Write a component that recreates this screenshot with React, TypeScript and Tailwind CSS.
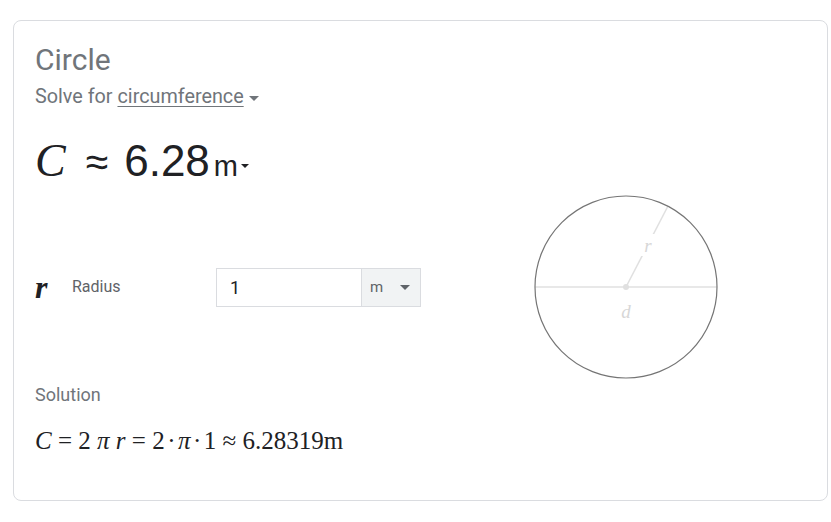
const roboto = { fontFamily: "Roboto, 'Liberation Sans', sans-serif" };
const arial = { fontFamily: "'Liberation Sans', Arial, sans-serif" };
const serif = { fontFamily: "'Liberation Serif', 'Times New Roman', serif" };

// Small triangular caret used by the dropdowns.
const Caret = ({ className }: { className: string }) => (
  <svg viewBox="0 0 10 5" className={className} fill="currentColor">
    <path d="M0 0 L10 0 L5 5 Z" />
  </svg>
);

const CircleDiagram = () => (
  <svg width="190" height="190" viewBox="0 0 190 190">
    <line x1="4" y1="95" x2="186" y2="95" stroke="#e0e0e0" strokeWidth="1.5" />
    <line x1="95" y1="95" x2="137" y2="14" stroke="#e0e0e0" strokeWidth="1.5" />
    <circle cx="95" cy="95" r="3" fill="#e0e0e0" />
    <circle cx="95" cy="95" r="91" fill="none" stroke="#757575" strokeWidth="1.2" />
    <rect x="110" y="42" width="14" height="22" fill="#fff" />
    <text x="117" y="60" textAnchor="middle" fontSize="19" fontStyle="italic" fill="#d7d7d7" style={serif}>
      r
    </text>
    <text x="95" y="126" textAnchor="middle" fontSize="19" fontStyle="italic" fill="#d7d7d7" style={serif}>
      d
    </text>
  </svg>
);

export default function App() {
  return (
    <div className="h-[522px] w-[831px] bg-white pl-[13px] pr-[3px] pt-[20px]" style={roboto}>
      <div className="flex h-[481px] w-[815px] flex-col rounded-[8px] border border-[#dadce0] pl-[21px] pt-[19px]">
        <div className="text-[30px] leading-[40px] text-[#70757a]">Circle</div>
        <div className="mt-[4px] flex items-center text-[19.8px] leading-[26px] text-[#70757a]">
          <span>Solve for&nbsp;</span>
          <span className="underline decoration-1 underline-offset-[3px]">circumference</span>
          <Caret className="ml-[5px] mt-[2px] h-[5px] w-[10px]" />
        </div>

        <div className="mt-[23px] flex items-baseline text-[#202124]">
          <span className="text-[46px] italic leading-[56px]" style={serif}>
            C
          </span>
          <span className="ml-[20px] text-[41px] leading-[40px]" style={arial}>
            ≈
          </span>
          <span className="ml-[16px] text-[44px] leading-[56px]" style={arial}>
            6.28
          </span>
          <span className="ml-[4px] text-[29px]" style={arial}>
            m
          </span>
          <Caret className="ml-[3px] h-[4px] w-[8px] -translate-y-[8px]" />
        </div>

        <div className="mt-[3px] flex">
          <div className="flex w-[496px] items-center">
            <span className="w-[37px] text-[32px] italic font-bold text-[#202124]" style={serif}>
              r
            </span>
            <span className="w-[144px] text-[16px] text-[#5f6368]">Radius</span>
            <div className="flex h-[39px] w-[205px] border border-[#dadce0]">
              <div className="flex w-[144px] items-center pl-[13px] text-[18px] text-[#202124]">1</div>
              <div className="flex flex-1 items-center justify-between border-l border-[#dadce0] bg-[#f1f3f4] pl-[8px] pr-[10px] text-[15px] text-[#5f6368]">
                <span>m</span>
                <Caret className="h-[5px] w-[10px]" />
              </div>
            </div>
          </div>
          <div>
            <CircleDiagram />
          </div>
        </div>

        <div className="mt-[1px] text-[18px] leading-[24px] text-[#70757a]">Solution</div>
        <div className="mt-[18px] text-[25px] leading-[32px] text-[#202124]" style={serif}>
          <i>C</i> = 2 <i>π</i> <i>r</i> = 2<span className="mx-[2.5px]">·</span>
          <i>π</i>
          <span className="mx-[2.5px]">·</span>1 ≈ 6.28319m
        </div>
      </div>
    </div>
  );
}
